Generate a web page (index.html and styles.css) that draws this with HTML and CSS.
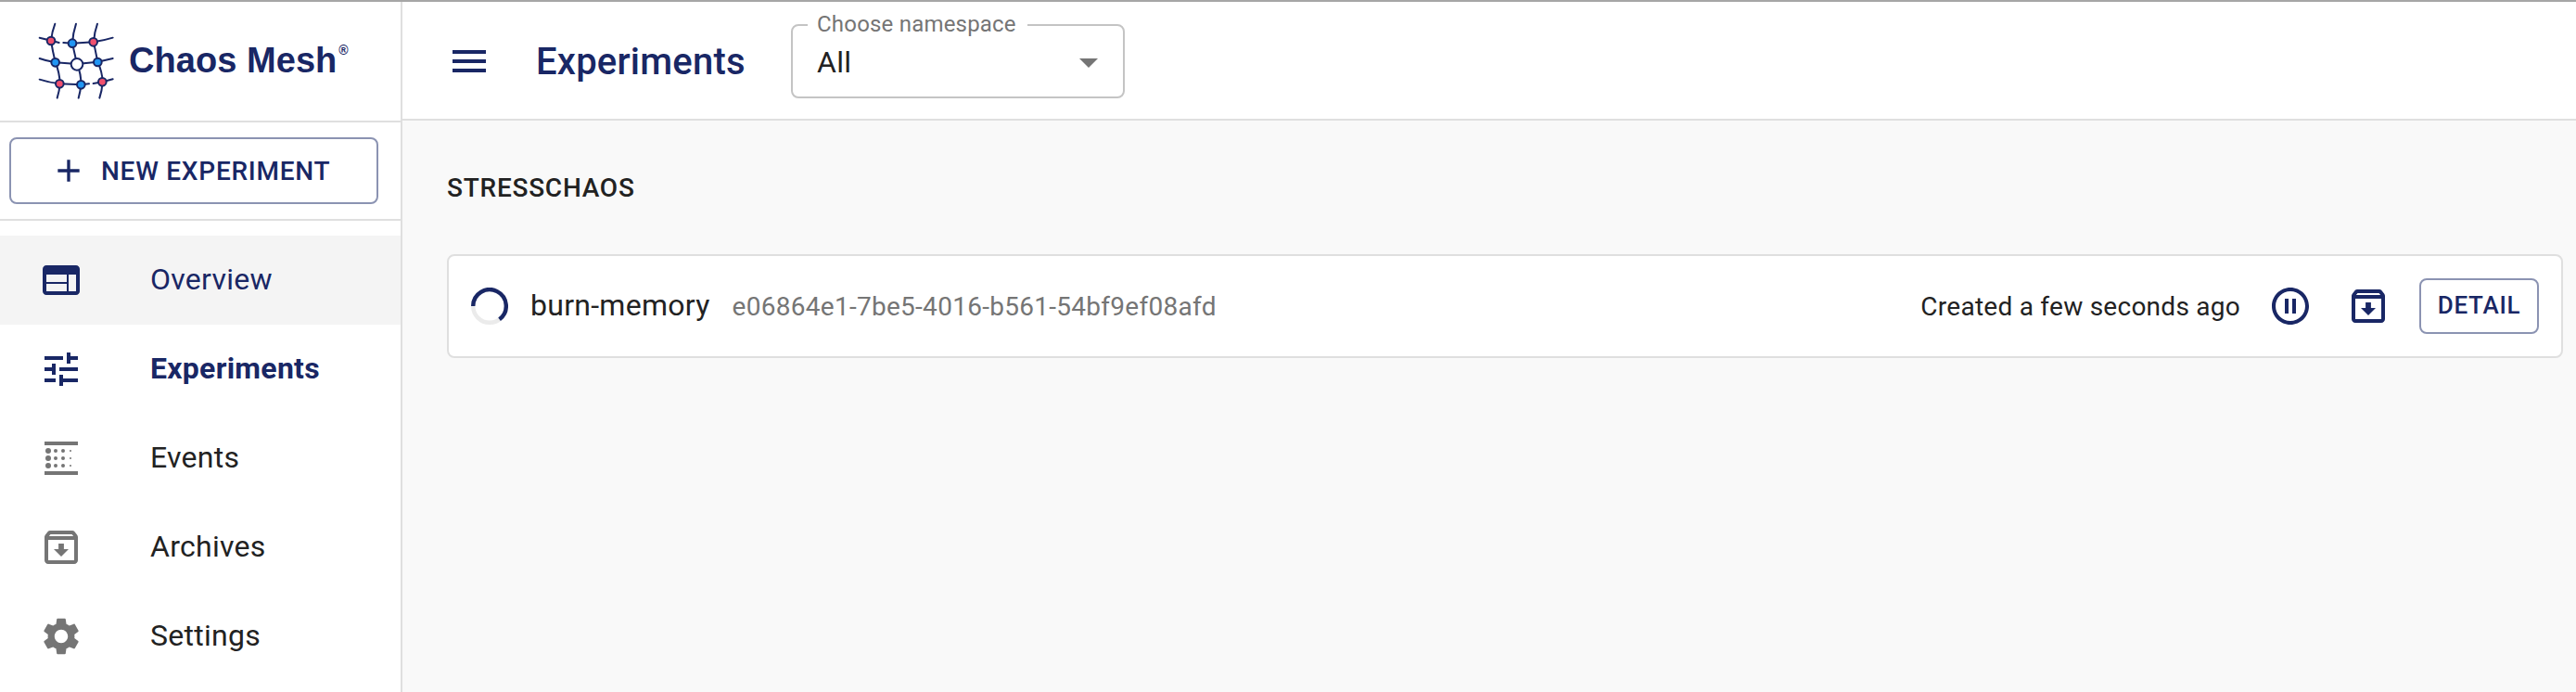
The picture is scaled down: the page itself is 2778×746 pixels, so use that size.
FILE: index.html
```html
<!DOCTYPE html>
<html lang="en">
<head>
<meta charset="utf-8">
<title>Experiments | Chaos Mesh</title>
<link rel="stylesheet" href="styles.css">
</head>
<body>
<div class="app">
  <aside class="sidebar">
    <div class="brand">
      <svg class="brand-mark" viewBox="120 70 252 256" fill="none" stroke="#192765" stroke-width="6" stroke-linecap="round">
        <path d="M178 78Q168 104 165 133Q170 165 179 202Q193 236 194 272Q192 296 185 318M246 78Q236 108 234 141L249 208Q263 240 262 275Q260 297 254 318M315 78Q305 106 303 137L316 201Q331 234 332 266Q330 294 322 318"/>
        <path d="M128 123L165 132L191 139M205 139L234 141L303 137Q336 132 365 123M128 190Q150 198 179 203L249 208L316 201L365 190M128 258Q158 268 194 272L262 275L288 272M302 271L332 266L365 257"/>
        <g fill="#f0506e"><circle cx="165" cy="133" r="13"/><circle cx="302" cy="137" r="13"/><circle cx="193" cy="272" r="13"/><circle cx="331" cy="266" r="13"/></g>
        <g fill="#2196f3"><circle cx="234" cy="141" r="13"/><circle cx="179" cy="203" r="13"/><circle cx="316" cy="202" r="13"/><circle cx="262" cy="275" r="13"/></g>
        <circle cx="249" cy="209" r="19" fill="#fff"/>
      </svg>
      <span class="brand-name">Chaos Mesh</span><span class="brand-reg">®</span>
    </div>
    <div class="new-wrap">
      <button class="btn btn-new">
        <svg class="icon-add" viewBox="0 0 24 24"><path d="M19 13h-6v6h-2v-6H5v-2h6V5h2v6h6v2z"/></svg>
        <span>NEW EXPERIMENT</span>
      </button>
    </div>
    <nav class="menu">
      <a class="item hovered"><svg class="icon" viewBox="0 0 24 24"><path d="M20 4H4c-1.1 0-1.99.9-1.99 2L2 18c0 1.1.9 2 2 2h16c1.1 0 2-.9 2-2V6c0-1.1-.9-2-2-2zm-5 14H4v-4h11v4zm0-5H4V9h11v4zm5 5h-4V9h4v9z"/></svg><span>Overview</span></a>
      <a class="item active"><svg class="icon" viewBox="0 0 24 24"><path d="M3 17v2h6v-2H3zM3 5v2h10V5H3zm10 16v-2h8v-2h-8v-2h-2v6h2zM7 9v2H3v2h4v2h2V9H7zm14 4v-2H11v2h10zm-6-4h2V7h4V5h-4V3h-2v6z"/></svg><span>Experiments</span></a>
      <a class="item"><svg class="icon" viewBox="0 0 24 24"><path d="M3 3h18v2H3zM3 19h18v2H3z"/><circle cx="5" cy="8" r="1.5"/><circle cx="5" cy="12" r="1.5"/><circle cx="5" cy="16" r="1.5"/><circle cx="9" cy="8" r="1"/><circle cx="9" cy="12" r="1"/><circle cx="9" cy="16" r="1"/><circle cx="13" cy="8" r="1"/><circle cx="13" cy="12" r="1"/><circle cx="13" cy="16" r="1"/><circle cx="17" cy="8" r=".5"/><circle cx="17" cy="12" r=".5"/><circle cx="17" cy="16" r=".5"/></svg><span>Events</span></a>
      <a class="item"><svg class="icon" viewBox="0 0 24 24"><path d="M20.54 5.23l-1.39-1.68C18.88 3.21 18.47 3 18 3H6c-.47 0-.88.21-1.16.55L3.46 5.23C3.17 5.57 3 6.02 3 6.5V19c0 1.1.9 2 2 2h14c1.1 0 2-.9 2-2V6.5c0-.48-.17-.93-.46-1.27zM6.24 5h11.52l.83 1H5.42l.82-1zM5 19V8h14v11H5zm8.45-9h-2.9v3H8l4 4 4-4h-2.55z"/></svg><span>Archives</span></a>
      <a class="item"><svg class="icon" viewBox="0 0 24 24"><path d="M19.14 12.94c.04-.3.06-.61.06-.94 0-.32-.02-.64-.07-.94l2.03-1.58c.18-.14.23-.41.12-.61l-1.92-3.32c-.12-.22-.37-.29-.59-.22l-2.39.96c-.5-.38-1.03-.7-1.62-.94l-.36-2.54c-.04-.24-.24-.41-.48-.41h-3.84c-.24 0-.43.17-.47.41l-.36 2.54c-.59.24-1.13.57-1.62.94l-2.39-.96c-.22-.08-.47 0-.59.22L2.74 8.87c-.12.21-.08.47.12.61l2.03 1.58c-.05.3-.09.63-.09.94s.02.64.07.94l-2.03 1.58c-.18.14-.23.41-.12.61l1.92 3.32c.12.22.37.29.59.22l2.39-.96c.5.38 1.03.7 1.62.94l.36 2.54c.05.24.24.41.48.41h3.84c.24 0 .44-.17.47-.41l.36-2.54c.59-.24 1.13-.56 1.62-.94l2.39.96c.22.08.47 0 .59-.22l1.92-3.32c.12-.22.07-.47-.12-.61l-2.01-1.58zM12 15.6c-1.98 0-3.6-1.62-3.6-3.6s1.62-3.6 3.6-3.6 3.6 1.62 3.6 3.6-1.62 3.6-3.6 3.6z"/></svg><span>Settings</span></a>
    </nav>
  </aside>
  <div class="page">
    <header class="topbar">
      <svg class="icon navy" viewBox="0 0 24 24"><path d="M3 18h18v-2H3v2zm0-5h18v-2H3v2zm0-7v2h18V6H3z"/></svg>
      <h1 class="title">Experiments</h1>
      <fieldset class="select">
        <legend>Choose namespace</legend>
        <div class="select-row">
          <span class="select-value">All</span>
          <svg class="icon gray" viewBox="0 0 24 24"><path d="M7 10l5 5 5-5z"/></svg>
        </div>
      </fieldset>
    </header>
    <main class="content">
      <h2 class="group">STRESSCHAOS</h2>
      <section class="card">
        <svg class="spinner" viewBox="0 0 40 40" fill="none" stroke-width="4.4"><circle cx="20" cy="20" r="17.8" stroke="#ebebeb"/><path d="M2.2 20A17.8 17.8 0 1 1 30.6 34.3" stroke="#192765"/></svg>
        <span class="name">burn-memory</span>
        <span class="uuid">e06864e1-7be5-4016-b561-54bf9ef08afd</span>
        <span class="created">Created a few seconds ago</span>
        <svg class="icon navy pause" viewBox="0 0 24 24"><path d="M9 16h2V8H9v8zm3-14C6.48 2 2 6.48 2 12s4.48 10 10 10 10-4.48 10-10S17.52 2 12 2zm0 18c-4.41 0-8-3.59-8-8s3.59-8 8-8 8 3.59 8 8-3.59 8-8 8zm1-4h2V8h-2v8z"/></svg>
        <svg class="icon navy archive" viewBox="0 0 24 24"><path d="M20.54 5.23l-1.39-1.68C18.88 3.21 18.47 3 18 3H6c-.47 0-.88.21-1.16.55L3.46 5.23C3.17 5.57 3 6.02 3 6.5V19c0 1.1.9 2 2 2h14c1.1 0 2-.9 2-2V6.5c0-.48-.17-.93-.46-1.27zM6.24 5h11.52l.83 1H5.42l.82-1zM5 19V8h14v11H5zm8.45-9h-2.9v3H8l4 4 4-4h-2.55z"/></svg>
        <button class="btn btn-detail">DETAIL</button>
      </section>
    </main>
  </div>
</div>
</body>
</html>
```
FILE: styles.css
```css
* { box-sizing: border-box; }
body { margin: 0; font-family: Roboto, "Liberation Sans", sans-serif; color: #222; background: #f9f9f9; }
.app { display: flex; height: 746px; border-top: 2px solid #a6a6a6; overflow: hidden; }
.sidebar { flex: none; width: 434px; background: #fff; border-right: 2px solid #dfdfdf; }
.brand { display: flex; height: 130px; padding: 21px 0 0 40px; border-bottom: 2px solid #dfdfdf; }
.brand-mark { width: 84px; height: 85.33px; flex: none; }
.brand-name { margin: 21px 0 0 15px; font: bold 38px/42px "Liberation Sans", Arial, sans-serif; letter-spacing: .05px; color: #192765; white-space: nowrap; }
.brand-reg { margin: 23px 0 0 2px; font: bold 14px/16px "Liberation Sans", Arial, sans-serif; color: #192765; }
.new-wrap { height: 106px; padding: 16px 24px 0 10px; border-bottom: 2px solid #dfdfdf; }
.btn { font-family: inherit; font-weight: 500; color: #192765; background: #fff; border: 2px solid #8b93b2; border-radius: 8px; padding: 0; }
.btn-new { display: flex; align-items: center; width: 398px; height: 72px; padding-left: 42px; font-size: 28px; letter-spacing: .75px; }
.icon-add { width: 40px; height: 40px; margin-right: 15px; fill: #192765; }
.menu { padding-top: 16px; }
.item { display: flex; align-items: center; height: 96px; padding-left: 42px; font-size: 32px; letter-spacing: .27px; }
.item span { padding-bottom: 2px; }
.item.hovered { background: #f4f4f4; }
.item.hovered, .item.active { color: #192765; }
.item.active { font-weight: 700; }
.icon { width: 48px; height: 48px; flex: none; fill: #757575; }
.item .icon { margin-right: 72px; }
.hovered .icon, .active .icon, .icon.navy { fill: #192765; }
.page { flex: 1; min-width: 0; }
.topbar { display: flex; align-items: center; height: 128px; padding: 2px 0 0 48px; background: #fff; border-bottom: 2px solid #dfdfdf; }
.title { margin: 0 0 0 48px; width: 275px; font-size: 40px; font-weight: 500; letter-spacing: .22px; color: #192765; }
.select { width: 360px; height: 93px; margin: -13px 0 0; padding: 0 13px 0 16px; border: 2px solid #c4c4c4; border-radius: 8px; min-width: 0; }
.select legend { padding: 0 12px 2px 10px; height: 28px; font-size: 24px; line-height: 26px; letter-spacing: .2px; color: #757575; }
.select-row { display: flex; justify-content: space-between; align-items: center; height: 51px; padding-left: 10px; }
.select-value { font-size: 32px; letter-spacing: .3px; }
.content { padding: 48px 14px 0 48px; }
.group { margin: 0; height: 96px; font-size: 28px; line-height: 49px; font-weight: 500; letter-spacing: .75px; }
.card { display: flex; align-items: center; height: 112px; padding: 0 24px; background: #fff; border: 2px solid #dfdfdf; border-radius: 8px; }
.spinner { width: 40px; height: 40px; flex: none; }
.name { margin-left: 24px; padding-bottom: 2px; font-size: 32px; letter-spacing: .27px; }
.uuid { margin-left: 24px; font-size: 28px; letter-spacing: .28px; color: #757575; }
.created { margin-left: auto; font-size: 28px; letter-spacing: .26px; }
.pause { margin-left: 30px; }
.archive { margin-left: 36px; }
.btn-detail { width: 129px; height: 60px; margin-left: 31px; padding-bottom: 2px; font-size: 26px; letter-spacing: .7px; }
```
